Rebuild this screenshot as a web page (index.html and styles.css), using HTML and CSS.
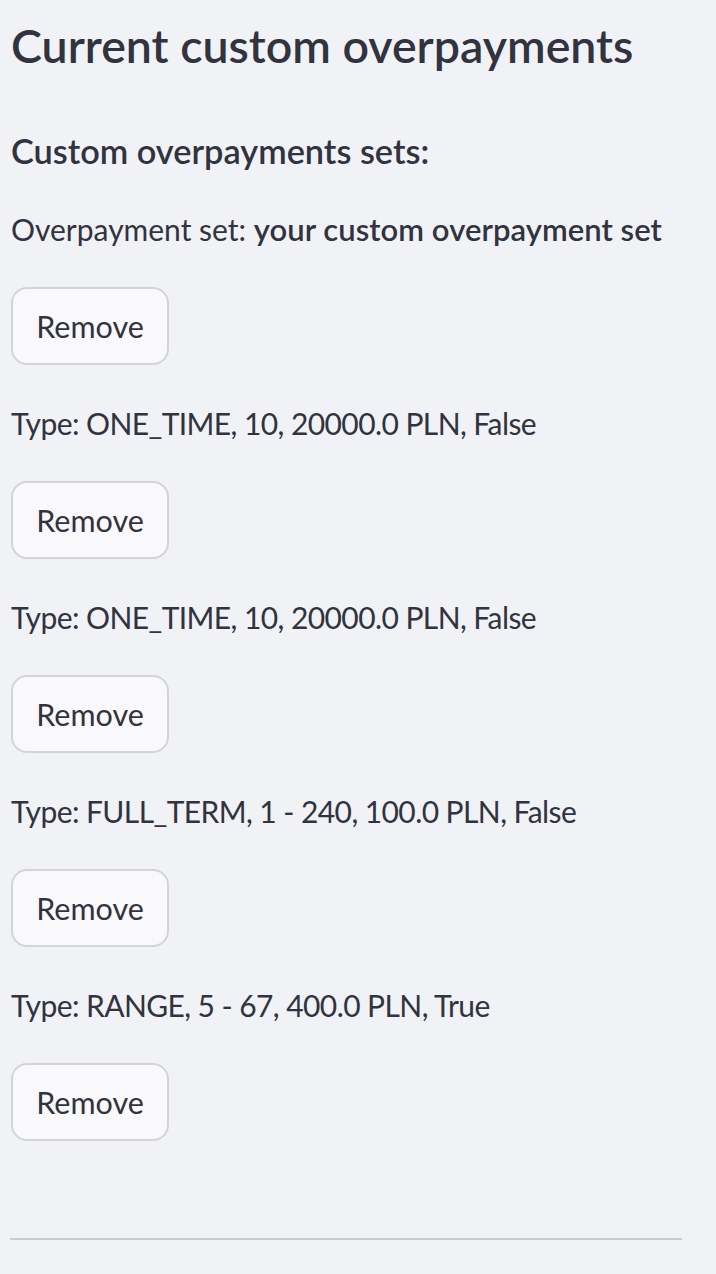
FILE: index.html
```html
<!DOCTYPE html>
<html lang="en">
<head>
<meta charset="utf-8">
<title>Current custom overpayments</title>
<link rel="stylesheet" href="styles.css">
</head>
<body>
<main class="page">
  <h3 class="title">Current custom overpayments</h3>
  <div class="stack">
    <h5 class="subtitle">Custom overpayments sets:</h5>
    <p class="line"><span class="label">Overpayment set: </span><strong>your custom overpayment set</strong></p>
    <button class="btn" type="button">Remove</button>
    <p class="line">Type: ONE_TIME, 10, 20000.0 PLN, False</p>
    <button class="btn" type="button">Remove</button>
    <p class="line">Type: ONE_TIME, 10, 20000.0 PLN, False</p>
    <button class="btn" type="button">Remove</button>
    <p class="line">Type: FULL_TERM, 1 - 240, 100.0 PLN, False</p>
    <button class="btn" type="button">Remove</button>
    <p class="line">Type: RANGE, 5 - 67, 400.0 PLN, True</p>
    <button class="btn" type="button">Remove</button>
  </div>
  <hr class="divider">
</main>
</body>
</html>
```

FILE: styles.css
```css
html, body {
  margin: 0;
  padding: 0;
  background: #f0f2f6;
}

body {
  font-family: "Lato", "Noto Sans", sans-serif;
  color: #31333f;
}

.page {
  padding: 15px 0 0 11px;
  width: 671px;
}

.title {
  margin: 0 0 56px 0;
  font-size: 46.5px;
  line-height: 60px;
  font-weight: 600;
}

.stack {
  display: flex;
  flex-direction: column;
  align-items: flex-start;
  gap: 32px;
}

.subtitle {
  margin: 0;
  font-size: 34.3px;
  line-height: 40px;
  font-weight: 600;
}

.line {
  margin: 0;
  font-size: 30px;
  line-height: 52px;
  font-weight: 400;
  letter-spacing: -0.58px;
  white-space: nowrap;
}

.line .label {
  letter-spacing: 0;
}

.line strong {
  font-weight: 600;
  font-size: 31px;
  letter-spacing: 0.05px;
}

.btn {
  box-sizing: border-box;
  width: 158px;
  height: 78px;
  display: inline-flex;
  align-items: center;
  justify-content: center;
  padding: 0;
  background: #f9f9fb;
  border: 2px solid #d3d4d8;
  border-radius: 16px;
  font-family: inherit;
  font-size: 30.5px;
  color: #31333f;
}

.divider {
  margin: 97px 0 0 -1px;
  width: 672px;
  height: 2px;
  border: 0;
  background: #cacbd0;
}
```
